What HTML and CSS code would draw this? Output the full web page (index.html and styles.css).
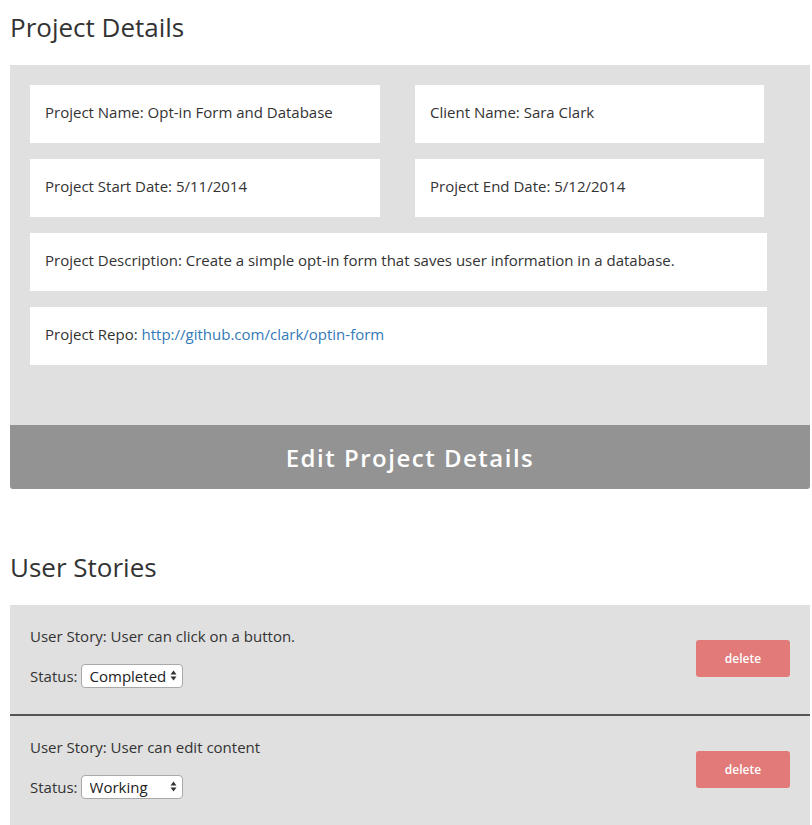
FILE: index.html
```html
<!DOCTYPE html>
<html>
<head>
<meta charset="utf-8">
<link rel="stylesheet" href="styles.css">
</head>
<body>
<div class="page">
  <h1 class="title">Project Details</h1>
  <section class="details">
    <div class="grid">
      <div class="card">Project Name: Opt-in Form and Database</div>
      <div class="card">Client Name: Sara Clark</div>
      <div class="card">Project Start Date: 5/11/2014</div>
      <div class="card">Project End Date: 5/12/2014</div>
      <div class="card wide">Project Description: Create a simple opt-in form that saves user information in a database.</div>
      <div class="card wide">Project Repo:&nbsp;<a class="link" href="#">http://github.com/clark/optin-form</a></div>
    </div>
  </section>
  <button class="edit-btn">Edit Project Details</button>

  <h2 class="title stories-title">User Stories</h2>
  <div class="stories">
    <div class="story">
      <div class="story-info">
        <p class="story-text">User Story: User can click on a button.</p>
        <div class="status-row">
          <span>Status:</span>
          <span class="select-wrap">
            <select class="status-select"><option>Completed</option><option>Working</option></select>
            <svg class="arrows" width="7" height="11" viewBox="0 0 7 11"><path d="M3.5 0.5 L6.5 4.5 L0.5 4.5 Z M3.5 10.5 L6.5 6.5 L0.5 6.5 Z" fill="#333"/></svg>
          </span>
        </div>
      </div>
      <button class="delete-btn">delete</button>
    </div>
    <div class="story">
      <div class="story-info">
        <p class="story-text">User Story: User can edit content</p>
        <div class="status-row">
          <span>Status:</span>
          <span class="select-wrap">
            <select class="status-select"><option>Working</option><option>Completed</option></select>
            <svg class="arrows" width="7" height="11" viewBox="0 0 7 11"><path d="M3.5 0.5 L6.5 4.5 L0.5 4.5 Z M3.5 10.5 L6.5 6.5 L0.5 6.5 Z" fill="#333"/></svg>
          </span>
        </div>
      </div>
      <button class="delete-btn">delete</button>
    </div>
  </div>
</div>
</body>
</html>
```
FILE: styles.css
```css
html, body {
  margin: 0;
  padding: 0;
  background: #fff;
}
body {
  font-family: "Open Sans", "Liberation Sans", sans-serif;
  color: #333;
  font-size: 15px;
}
.page {
  width: 800px;
  padding-left: 10px;
}
.title {
  font-size: 26px;
  font-weight: 400;
  line-height: 36px;
  margin: 9px 0 20px;
  color: #333;
}
.details {
  background: #e0e0e0;
  padding: 20px 20px 60px 20px;
}
.grid {
  display: grid;
  grid-template-columns: 350px 349px;
  column-gap: 35px;
  row-gap: 16px;
  width: 737px;
}
.card {
  background: #fff;
  height: 58px;
  padding: 0 15px 4px;
  display: flex;
  align-items: center;
  box-sizing: border-box;
  white-space: nowrap;
}
.card.wide {
  grid-column: 1 / span 2;
  width: 737px;
}
.link {
  color: #337ab7;
  text-decoration: none;
}
.edit-btn {
  display: block;
  width: 800px;
  height: 64px;
  background: #939393;
  color: #fff;
  border: none;
  border-radius: 0 0 3px 3px;
  font-family: "Open Sans", "Liberation Sans", sans-serif;
  font-size: 24px;
  font-weight: 600;
  letter-spacing: 1.5px;
  padding: 0;
  margin: 0;
}
.stories-title {
  margin-top: 60px;
  margin-bottom: 20px;
}
.stories {
  background: #e0e0e0;
}
.story {
  display: flex;
  align-items: center;
  justify-content: space-between;
  padding: 20px 20px 26px 20px;
}
.story + .story {
  border-top: 2px solid #555;
}
.story-text {
  margin: 0;
  line-height: 22px;
}
.status-row {
  display: flex;
  align-items: center;
  gap: 3px;
  margin-top: 17px;
  height: 24px;
}
.select-wrap {
  position: relative;
  display: inline-block;
}
.status-select {
  appearance: none;
  -webkit-appearance: none;
  width: 102px;
  height: 24px;
  border: 1px solid #a9a9a9;
  border-radius: 4px;
  background: #fff;
  font-family: "Open Sans", "Liberation Sans", sans-serif;
  font-size: 15px;
  color: #222;
  padding: 0 0 0 8px;
  margin: 0;
  display: block;
}
.arrows {
  position: absolute;
  right: 6px;
  top: 6px;
  pointer-events: none;
}
.delete-btn {
  width: 94px;
  height: 37px;
  background: #e17a79;
  color: #fff;
  border: none;
  border-radius: 3px;
  font-family: "Open Sans", "Liberation Sans", sans-serif;
  font-size: 12px;
  font-weight: 600;
  padding: 0;
  margin-top: 4px;
}
```
